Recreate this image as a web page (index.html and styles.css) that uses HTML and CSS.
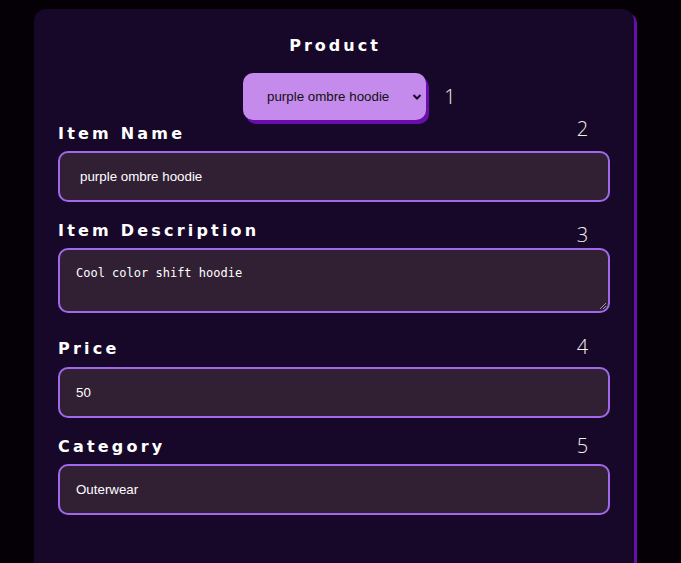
FILE: index.html
```html
<!DOCTYPE html>
<html>
<head>
<meta charset="utf-8">
<link rel="stylesheet" href="styles.css">
</head>
<body>
<div class="card">
  <h2 class="title">Product</h2>
  <div class="select-row">
    <div class="select-box">
      <span class="select-text">purple ombre hoodie</span>
      <svg class="chev" width="10" height="8" viewBox="0 0 10 8"><path d="M1.5 2 L5 5.5 L8.5 2" fill="none" stroke="#1a0a2a" stroke-width="2"/></svg>
    </div>
    <span class="num num-1">1</span>
  </div>

  <div class="field">
    <div class="head head-2"><span class="label">Item Name</span><span class="num">2</span></div>
    <div class="input input-name">purple ombre hoodie</div>
  </div>

  <div class="field">
    <div class="head head-3"><span class="label">Item Description</span><span class="num">3</span></div>
    <div class="input textarea">Cool color shift hoodie
      <svg class="grip" width="8" height="8" viewBox="0 0 8 8"><path d="M7 1 L1 7 M7 4 L4 7" stroke="#999" stroke-width="1"/></svg>
    </div>
  </div>

  <div class="field">
    <div class="head head-4"><span class="label">Price</span><span class="num">4</span></div>
    <div class="input">50</div>
  </div>

  <div class="field">
    <div class="head head-5"><span class="label">Category</span><span class="num">5</span></div>
    <div class="input">Outerwear</div>
  </div>
</div>
</body>
</html>
```
FILE: styles.css
```css
html, body {
  margin: 0;
  padding: 0;
  background: #050006;
  height: 100%;
  overflow: hidden;
}
.card {
  margin: 9px 0 0 34px;
  width: 600px;
  height: 600px;
  box-sizing: border-box;
  background: #170829;
  border-radius: 12px;
  box-shadow: 3px 3px 0 #6a0dad;
  padding: 25px 24px 0 24px;
  font-family: "DejaVu Sans", "Lato", sans-serif;
}
.title {
  margin: 0;
  text-align: center;
  color: #ffffff;
  font-size: 16px;
  font-weight: 700;
  letter-spacing: 3px;
  line-height: 24px;
  padding-left: 2px;
}
.select-row {
  display: flex;
  justify-content: center;
  align-items: center;
  margin-top: 15px;
  padding-left: 49px;
}
.select-box {
  width: 183px;
  height: 47px;
  box-sizing: border-box;
  background: #c48bec;
  border-radius: 10px;
  box-shadow: 3px 4px 0 #6a0dad;
  display: flex;
  align-items: center;
  justify-content: space-between;
  padding: 0 4px 0 24px;
}
.select-text {
  font-family: "Liberation Sans", Arial, sans-serif;
  font-size: 13.33px;
  color: #111;
}
.chev { display: block; }
.num {
  font-family: "Open Sans", "DejaVu Sans", sans-serif;
  font-weight: 300;
  font-size: 20px;
  color: #f4f2e6;
  line-height: 24px;
  width: 55px;
  text-align: center;
  position: relative;
}
.num-1 {
  width: 48px;
}
.head {
  display: flex;
  justify-content: space-between;
  align-items: flex-start;
  height: 24px;
}
.label {
  color: #ffffff;
  font-size: 16px;
  font-weight: 700;
  letter-spacing: 3.2px;
  line-height: 24px;
}
.head-2 { margin: 2px 0 5px; }
.head-2 .num { top: -5px; }
.head-3 { margin: 17px 0 5px; }
.head-3 .num { top: 4px; }
.head-4 { margin: 24px 0 6px; }
.head-4 .num { top: -2px; }
.head-5 { margin: 17px 0 5px; }
.head-5 .num { top: -1px; }
.input {
  height: 51px;
  box-sizing: border-box;
  border: 2px solid #a268ec;
  border-radius: 10px;
  background: #312034;
  color: #ffffff;
  font-family: "Liberation Sans", Arial, sans-serif;
  font-size: 13.33px;
  display: flex;
  align-items: center;
  padding: 0 16px;
}
.input-name { padding-left: 20px; }
.textarea {
  height: 65px;
  align-items: flex-start;
  padding-top: 16px;
  font-family: "DejaVu Sans Mono", "Liberation Mono", monospace;
  font-size: 12px;
  position: relative;
}
.grip {
  position: absolute;
  right: 1px;
  bottom: 1px;
}
```
